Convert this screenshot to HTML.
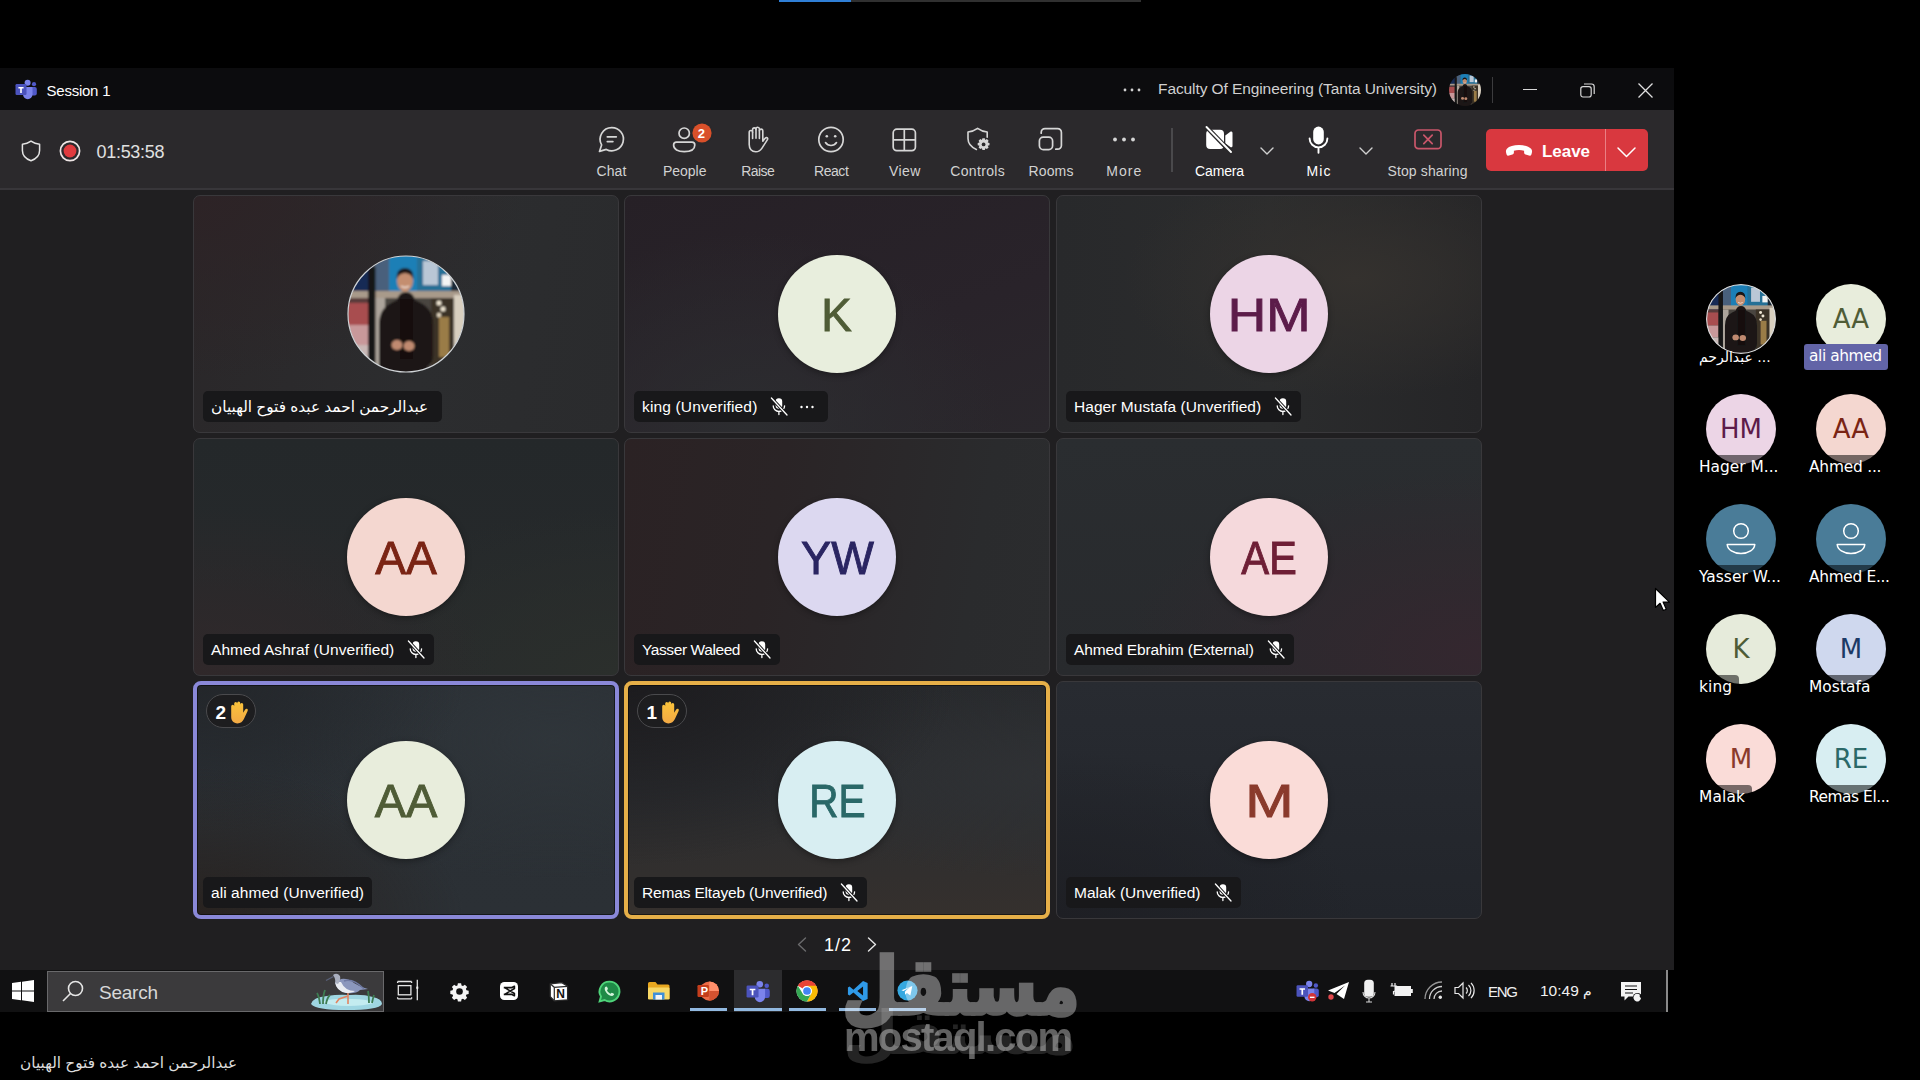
<!DOCTYPE html>
<html lang="en">
<head>
<meta charset="utf-8">
<title>Session 1</title>
<style>
*{box-sizing:border-box;margin:0;padding:0}
html,body{width:1920px;height:1080px;overflow:hidden;background:#000}
body{position:relative;font-family:"Liberation Sans","DejaVu Sans",sans-serif;color:#fff}
.abs{position:absolute}
.t{position:absolute;white-space:nowrap;line-height:1}
svg{position:absolute;overflow:visible}
/* top progress */
#prog{left:779px;top:0;width:362px;height:2px;background:#303030}
#prog i{display:block;width:72px;height:2px;background:#2f7fd6}
/* window */
#win{left:0;top:68px;width:1674px;height:902px;background:#201f21}
#title{left:0;top:0;width:1674px;height:42px;background:#0c0c0e}
#tool{left:0;top:42px;width:1674px;height:80px;background:#2b292c;border-bottom:2px solid #38363a}
.lbl{font-size:14px;color:#d2d2d2;text-align:center;transform:translateX(-50%)}
.lbl.w{color:#fff}
/* tiles */
.tile{position:absolute;width:426px;height:238px;border-radius:7px;border:1px solid #39383b;overflow:hidden}
.av{position:absolute;left:153px;top:59px;width:118px;height:118px;border-radius:50%;font-size:46.500px;letter-spacing:0;-webkit-text-stroke:.9px currentColor;text-align:center;line-height:120px;box-shadow:0 2px 6px rgba(0,0,0,.35)}
.nm{position:absolute;left:9px;top:195px;height:31px;border-radius:5px;background:#18181a;font-size:15.5px;line-height:31px;padding:0 8px;color:#fff;white-space:nowrap}
.nm svg{position:static;display:inline-block;vertical-align:middle}
.nm .mic{margin:-3px 1px 0 13px}
.nm .dots{margin:-2px 6px 0 11px}
.nm[dir=rtl]{padding:0 14px 0 8px;font-size:15.300px}
.tile.hl{border-color:transparent;overflow:visible}
.ring{position:absolute;left:-1px;top:-1px;right:-1px;bottom:-1px;border:4px solid;border-radius:8px;box-shadow:inset 0 0 0 1px rgba(0,0,0,.5)}
.hand .hi{position:absolute;left:21px;top:4.500px}
.hand .hi svg{position:static}
.hand{position:absolute;left:12px;top:12px;width:50px;height:34px;border-radius:17px;border:1px solid #4a4a4d;background:#1d1d1f;font-size:19px;font-weight:bold;line-height:35px;padding-left:8.500px}
/* side */
.sa{position:absolute;width:70px;height:70px;border-radius:50%;font-family:"DejaVu Sans",sans-serif;font-size:26px;line-height:70px;text-align:center;overflow:hidden}
.sl{position:absolute;font-family:"DejaVu Sans",sans-serif;font-size:15.400px;line-height:24px;color:#fff;white-space:nowrap;background:rgba(0,0,0,.52);padding:0 7px 0 0;border-radius:0 4px 0 0}
/* taskbar */
#task{left:0;top:970px;width:1668px;height:42px;background:#111112}
.ul{position:absolute;top:38px;height:3px;width:37px;background:#92b9e0}
</style>
</head>
<body>
<div class="abs" id="prog"><i></i></div>

<div class="abs" id="win">
  <div class="abs" id="title">
    <span class="t" style="left:46.500px;top:14.500px;font-size:15px;color:#fff"><span class="ls" style="letter-spacing:-0.234px">Session 1</span></span>
    <span class="t" style="left:1158px;top:13px;font-size:15.5px;color:#d0d0d0"><span class="ls" style="letter-spacing:-0.089px">Faculty Of Engineering (Tanta University)</span></span>

    <!-- teams logo -->
    <svg style="left:15px;top:11px" width="22" height="21" viewBox="0 0 22 21">
      <circle cx="19" cy="5.2" r="2.1" fill="#5059c9"/>
      <rect x="15.5" y="8" width="6.3" height="8.5" rx="2" fill="#5059c9"/>
      <circle cx="12.6" cy="3.8" r="3" fill="#7b83eb"/>
      <path d="M8 8h9.5v7.5a4.7 4.7 0 0 1-9.5 0z" fill="#7b83eb"/>
      <rect x="0.5" y="5" width="11" height="11" rx="1.2" fill="#4b53bc"/>
      <path d="M3.4 7.9h5.2v1.5H6.8v4.6H5.2V9.4H3.4z" fill="#fff"/>
    </svg>
    <svg style="left:1123px;top:20px" width="18" height="4" viewBox="0 0 18 4"><circle cx="2" cy="2" r="1.4" fill="#d0d0d0"/><circle cx="9" cy="2" r="1.4" fill="#d0d0d0"/><circle cx="16" cy="2" r="1.4" fill="#d0d0d0"/></svg>
    <!-- small avatar -->
    <svg style="left:1449px;top:6px" width="32" height="32" viewBox="0 0 118 118"><defs><clipPath id="cp3"><circle cx="59" cy="59" r="59"/></clipPath></defs><g clip-path="url(#cp3)"><use href="#phg"/></g></svg>
    <div class="abs" style="left:1492px;top:9px;width:1px;height:26px;background:#3c3c3e"></div>
    <div class="abs" style="left:1523px;top:21px;width:14px;height:1px;background:#d8d8d8"></div>
    <svg style="left:1580px;top:15px" width="15" height="15" viewBox="0 0 15 15" fill="none" stroke="#d8d8d8" stroke-width="1.2"><rect x="0.8" y="3.6" width="10.4" height="10.4" rx="2.2"/><path d="M4 1h7.5a2.7 2.7 0 0 1 2.7 2.7V11"/></svg>
    <svg style="left:1638px;top:15px" width="15" height="15" viewBox="0 0 15 15" stroke="#e0e0e0" stroke-width="1.3"><path d="M0.5 0.5l14 14M14.5 0.5l-14 14"/></svg>
  </div>
  <div class="abs" id="tool">
    <span class="t" style="left:96.500px;top:32.500px;font-size:18px;color:#e0e0e0"><span class="ls" style="letter-spacing:-0.297px">01:53:58</span></span>

    <!-- shield -->
    <svg style="left:21px;top:30px" width="20" height="22" viewBox="0 0 20 22" fill="none" stroke="#e4e4e4" stroke-width="1.5" stroke-linejoin="round"><path d="M10 1.2c2.6 1.9 5.3 2.8 8.6 3v6.3c0 4.9-3.2 8.300-8.600 10.300C4.600 18.800 1.400 15.400 1.400 10.500V4.200C4.700 4 7.400 3.100 10 1.200z"/></svg>
    <!-- record -->
    <svg style="left:59px;top:30px" width="22" height="22" viewBox="0 0 22 22"><circle cx="11" cy="11" r="9.6" fill="none" stroke="#efe6e6" stroke-width="1.7"/><circle cx="11" cy="11" r="6.4" fill="#e03a3e"/></svg>

    <!-- chat -->
    <svg style="left:598px;top:16px" width="27" height="27" viewBox="0 0 27 27" fill="none" stroke="#d6d6d6" stroke-width="1.7" stroke-linecap="round" stroke-linejoin="round"><path d="M13.800 1.600a11.600 11.600 0 1 1-5.500 21.800L1.500 25.400l2.100-6.500A11.600 11.600 0 0 1 13.800 1.600z"/><path d="M9.300 10.800h9M9.300 15.600h5.600"/></svg>
    <span class="t lbl" style="left:611.5px;top:53.500px"><span class="ls" style="letter-spacing:0.141px">Chat</span></span>
    <!-- people -->
    <svg style="left:672px;top:17px" width="26" height="26" viewBox="0 0 26 26" fill="none" stroke="#d6d6d6" stroke-width="1.7"><circle cx="12.200" cy="6.200" r="5.200"/><path d="M4.500 15.200h15.500a2.800 2.800 0 0 1 2.800 2.800c0 4.300-4.400 6.600-10.600 6.600S1.600 22.300 1.600 18a2.900 2.900 0 0 1 2.900-2.800z"/></svg>
    <svg style="left:690px;top:11px" width="24" height="24" viewBox="0 0 24 24"><circle cx="12" cy="12" r="11.300" fill="#2a292b"/><circle cx="12" cy="12" r="9.600" fill="#d9502a"/></svg>
    <span class="t" style="left:697.8px;top:16.500px;font-size:13px;font-weight:bold;color:#fff">2</span>
    <span class="t lbl" style="left:684.7px;top:53.500px"><span class="ls" style="letter-spacing:-0.019px">People</span></span>
    <!-- raise -->
    <svg style="left:743.500px;top:16px" width="24" height="27" viewBox="0 0 24 27" fill="none" stroke="#d6d6d6" stroke-width="1.600" stroke-linecap="round" stroke-linejoin="round"><path d="M5.200 15.500V6.200a1.700 1.700 0 0 1 3.400 0V3.600a1.700 1.700 0 0 1 3.400 0V2.900a1.700 1.700 0 0 1 3.400 0v1.900a1.700 1.700 0 0 1 3.400 0v10.400l2.100-2.700c.8-1 2-1.200 2.600-.4.400.600.200 1.200-.2 1.800l-5.300 8.200c-1.500 2.300-3.400 3.700-6.200 3.700-4.200 0-6.600-3.100-6.600-7.300V8.900"/><path d="M8.600 6.200v6.300M12 3.600v8.700M15.400 4.800v7.700"/></svg>
    <span class="t lbl" style="left:757.8px;top:53.500px"><span class="ls" style="letter-spacing:-0.574px">Raise</span></span>
    <!-- react -->
    <svg style="left:817px;top:16px" width="28" height="28" viewBox="0 0 28 28" fill="none" stroke="#d6d6d6" stroke-width="1.700" stroke-linecap="round"><circle cx="14" cy="13.500" r="12.200"/><path d="M8.500 16.600c1.300 1.900 3.200 2.900 5.500 2.900s4.200-1 5.500-2.900"/><circle cx="9.800" cy="10.200" r="1.300" fill="#d6d6d6" stroke="none"/><circle cx="18.200" cy="10.200" r="1.300" fill="#d6d6d6" stroke="none"/></svg>
    <span class="t lbl" style="left:831.2px;top:53.500px"><span class="ls" style="letter-spacing:-0.445px">React</span></span>
    <!-- view -->
    <svg style="left:892px;top:18px" width="25" height="24" viewBox="0 0 25 24" fill="none" stroke="#d6d6d6" stroke-width="1.700"><rect x="1.200" y="1.200" width="22.200" height="21.400" rx="3.600"/><path d="M12.300 1.200v21.400M1.200 11.900h22.200"/></svg>
    <span class="t lbl" style="left:904.8px;top:53.500px"><span class="ls" style="letter-spacing:0.435px">View</span></span>
    <!-- controls -->
    <svg style="left:966px;top:17px" width="26" height="26" viewBox="0 0 26 26" fill="none" stroke="#d6d6d6" stroke-width="1.600" stroke-linejoin="round" stroke-linecap="round"><path d="M21.200 10.200V5c-3.600-.3-6.600-1.400-9.600-3.600C8.600 3.600 5.600 4.700 2 5v6.600c0 5 3 8.600 8.400 10.800"/><g transform="translate(17.600 17.400)" fill="#d6d6d6" stroke="none"><path d="M-1.200-6.200h2.400l.5 1.700 1.600-.8 1.700 1.700-.9 1.600 1.800.5v2.400l-1.800.5.900 1.600-1.700 1.700-1.600-.8-.5 1.700h-2.400l-.5-1.700-1.600.8-1.700-1.700.9-1.600-1.800-.5v-2.400l1.800-.5-.9-1.600 1.700-1.700 1.600.8z"/><circle r="1.900" fill="#2a292b"/></g></svg>
    <span class="t lbl" style="left:977.7px;top:53.500px"><span class="ls" style="letter-spacing:0.323px">Controls</span></span>
    <!-- rooms -->
    <svg style="left:1038px;top:17px" width="26" height="25" viewBox="0 0 26 25" fill="none" stroke="#d6d6d6" stroke-width="1.700" stroke-linecap="round"><path d="M3.200 6.200V5.400a3.800 3.800 0 0 1 3.800-3.800h12.600a3.800 3.800 0 0 1 3.800 3.800v13a3.800 3.800 0 0 1-3.800 3.800h-1.800"/><rect x="1.400" y="10.200" width="13.200" height="12.400" rx="3.800"/></svg>
    <span class="t lbl" style="left:1051px;top:53.500px"><span class="ls" style="letter-spacing:0.16px">Rooms</span></span>
    <!-- more -->
    <svg style="left:1112px;top:27px" width="24" height="5" viewBox="0 0 24 5" fill="#d6d6d6"><circle cx="3" cy="2.500" r="1.900"/><circle cx="12" cy="2.500" r="1.900"/><circle cx="21" cy="2.500" r="1.900"/></svg>
    <span class="t lbl" style="left:1124.3px;top:53.500px"><span class="ls" style="letter-spacing:1.031px">More</span></span>
    <div class="abs" style="left:1171px;top:18px;width:1.5px;height:44px;background:#4a494c"></div>
    <!-- camera off -->
    <svg style="left:1205px;top:16px" width="29" height="27" viewBox="0 0 29 27"><path d="M5.200 3.800h9.800a4 4 0 0 1 4 4v11.200a4 4 0 0 1-4 4H5.200a4 4 0 0 1-4-4V7.800a4 4 0 0 1 4-4z" fill="#fff"/><path d="M20.300 9.600l5-3.800c.9-.7 2.200-.1 2.200 1.100v13c0 1.200-1.300 1.800-2.200 1.100l-5-3.800z" fill="#fff"/><path d="M1 0.500l25 26" stroke="#2a292b" stroke-width="4.500"/><path d="M1.500 1l24.500 25" stroke="#fff" stroke-width="1.900" stroke-linecap="round"/></svg>
    <span class="t lbl w" style="left:1219.5px;top:53.500px"><span class="ls" style="letter-spacing:-0.159px">Camera</span></span>
    <svg style="left:1260px;top:37px" width="14" height="8" viewBox="0 0 14 8" fill="none" stroke="#d0d0d0" stroke-width="1.400" stroke-linecap="round" stroke-linejoin="round"><path d="M1 1l6 6 6-6"/></svg>
    <!-- mic -->
    <svg style="left:1308px;top:16px" width="21" height="28" viewBox="0 0 21 28"><rect x="5.200" y="0.600" width="10.600" height="17.800" rx="5.300" fill="#fff"/><path d="M1.600 12.500a8.900 8.900 0 0 0 17.800 0M10.500 21.800v5" fill="none" stroke="#fff" stroke-width="1.900" stroke-linecap="round"/></svg>
    <span class="t lbl w" style="left:1319px;top:53.500px"><span class="ls" style="letter-spacing:1.109px">Mic</span></span>
    <svg style="left:1359px;top:37px" width="14" height="8" viewBox="0 0 14 8" fill="none" stroke="#d0d0d0" stroke-width="1.400" stroke-linecap="round" stroke-linejoin="round"><path d="M1 1l6 6 6-6"/></svg>
    <!-- stop sharing -->
    <svg style="left:1414px;top:19px" width="28" height="21" viewBox="0 0 28 21" fill="none" stroke="#c9566a" stroke-width="1.700" stroke-linecap="round"><rect x="1" y="1" width="26" height="18.600" rx="3.400"/><path d="M9.800 6.200l8.400 8.400M18.200 6.200l-8.400 8.400"/></svg>
    <span class="t lbl" style="left:1427.5px;top:53.500px"><span class="ls" style="letter-spacing:0.126px">Stop sharing</span></span>
    <!-- leave -->
    <div class="abs" style="left:1486px;top:19px;width:162px;height:42px;border-radius:5px;background:#d9383f"></div>
    <div class="abs" style="left:1605px;top:19px;width:1px;height:42px;background:#ea7f84"></div>
    <svg style="left:1505px;top:34px" width="28" height="13" viewBox="0 0 28 13"><path d="M14 1C8.600 1 4.200 2.300 1.900 4.700.600 6 .700 8.200 1.600 10.400c.4 1 1.400 1.500 2.400 1.200l3.400-1c.9-.300 1.500-1.100 1.500-2V6.800c1.600-.600 3.300-.9 5.100-.9s3.500.3 5.100.9v1.800c0 .9.600 1.700 1.500 2l3.400 1c1 .3 2-.2 2.400-1.200.9-2.200 1-4.400-.3-5.700C23.800 2.300 19.400 1 14 1z" fill="#fff"/></svg>
    <span class="t" style="left:1542px;top:32.500px;font-size:17px;font-weight:bold;color:#fff"><span class="ls" style="letter-spacing:-0.051px">Leave</span></span>
    <svg style="left:1617px;top:37px" width="19" height="11" viewBox="0 0 19 11" fill="none" stroke="#fff" stroke-width="1.500" stroke-linecap="round" stroke-linejoin="round"><path d="M1 1l8.500 8.500L18 1"/></svg>
  </div>
</div>


<!-- tiles -->
<div class="tile" style="left:193px;top:195px;background:radial-gradient(ellipse at 0% 0%,#2d2326 0%,rgba(45,35,38,0) 55%),linear-gradient(100deg,#2a2729 0%,#2c2d2f 55%,#2a2b2d 100%);"><svg class="ph" style="left:153px;top:59px" width="118" height="118" viewBox="0 0 118 118">
<defs><clipPath id="cp"><circle cx="59" cy="59" r="58"/></clipPath><filter id="bl" x="-5%" y="-5%" width="110%" height="110%"><feGaussianBlur stdDeviation="0.9"/></filter></defs>
<g clip-path="url(#cp)"><g id="phg" filter="url(#bl)">
<rect x="-4" y="-4" width="126" height="126" fill="#4a443f"/>
<rect x="-4" y="-4" width="30" height="48" fill="#132a55"/>
<rect x="28" y="2" width="15" height="36" fill="#4a607c"/>
<rect x="42" y="-4" width="30" height="42" fill="#1b7fb6"/>
<rect x="70" y="-4" width="52" height="44" fill="#256f96"/>
<rect x="76" y="6" width="15" height="24" fill="#b9c7d6"/>
<rect x="95" y="20" width="10" height="11" fill="#f4f4f4"/>
<rect x="104" y="6" width="18" height="34" fill="#1d2b38"/>
<rect x="-4" y="36" width="126" height="7" fill="#a89a8a"/>
<rect x="-4" y="43" width="26" height="14" fill="#5a3a3a"/>
<rect x="0" y="48" width="21" height="22" fill="#a84e50"/>
<rect x="0" y="70" width="21" height="20" fill="#c8989a"/>
<rect x="0" y="90" width="24" height="30" fill="#c9b8b6"/>
<rect x="28" y="43" width="10" height="78" fill="#aca49b"/>
<rect x="84" y="43" width="24" height="78" fill="#3a3228"/>
<rect x="92" y="62" width="10" height="40" fill="#9a7c46"/>
<circle cx="92" cy="48" r="2.500" fill="#efe6d2"/><circle cx="96" cy="54" r="2.500" fill="#efe6d2"/><circle cx="92" cy="60" r="2.200" fill="#e4d8c0"/>
<rect x="107" y="40" width="15" height="82" fill="#d8cfbf"/>
<rect x="21" y="12" width="7.500" height="110" fill="#141414"/>
<path d="M32 122V70q0-16 12-22l6-3q2-8 9-8t9 8l6 3q12 6 12 22v30q0 8-6 12v10z" fill="#1b1919"/>
<path d="M53 44h13v60h-13z" fill="#121111"/>
<ellipse cx="58" cy="26" rx="8" ry="10.500" fill="#c48e70"/>
<path d="M49.500 24q0-11 8.500-11t8.500 11q-3-6-8.500-6t-8.500 6z" fill="#1a1512"/>
<path d="M54 31q4 3 8 0" stroke="#f0e2da" stroke-width="1.400" fill="none"/>
<ellipse cx="50" cy="90" rx="5.500" ry="5" fill="#c08a70"/><ellipse cx="62" cy="91" rx="5.500" ry="5" fill="#c08a70"/>
</g></g>
<circle cx="59" cy="59" r="58" fill="none" stroke="#cfd3d6" stroke-width="1.200"/>
</svg><div class="nm" dir="rtl"><span class="n">عبدالرحمن احمد عبده فتوح الهبيان</span></div></div>
<div class="tile" style="left:624px;top:195px;background:radial-gradient(ellipse at 30% 100%,#2c2d30 0%,rgba(44,45,48,0) 60%),linear-gradient(160deg,#262026 0%,#29232a 60%,#2a272c 100%);"><div class="av" style="background:#e8eedd;color:#4f5c36"><span class="ax" style="display:inline-block;transform:scaleX(0.982)">K</span></div><div class="nm"><span class="n"><span class="ls" style="letter-spacing:0.153px">king (Unverified)</span></span><svg class="mic" width="18" height="19" viewBox="0 0 18 19"><rect x="5.600" y="1.200" width="6.600" height="10.600" rx="3.300" fill="#fff"/><path d="M3.200 8.800a5.700 5.700 0 0 0 11.400 0M8.900 14.500v3" fill="none" stroke="#fff" stroke-width="1.300" stroke-linecap="round"/><path d="M1.200 0.800l16 17.400" stroke="#18181a" stroke-width="3.200"/><path d="M1.400 1l15.600 17" stroke="#fff" stroke-width="1.300" stroke-linecap="round"/></svg><svg class="dots" width="14" height="4" viewBox="0 0 14 4" fill="#fff"><circle cx="1.500" cy="2" r="1.200"/><circle cx="7" cy="2" r="1.200"/><circle cx="12.500" cy="2" r="1.200"/></svg></div></div>
<div class="tile" style="left:1056px;top:195px;background:radial-gradient(ellipse at 70% 35%,#34312e 0%,rgba(52,49,46,0) 55%),linear-gradient(90deg,#28292b 0%,#2b2c2d 50%,#252527 100%);"><div class="av" style="background:#ecd5e6;color:#5c1c4a"><span class="ax" style="display:inline-block;transform:scaleX(1.145)">HM</span></div><div class="nm"><span class="n"><span class="ls" style="letter-spacing:0.045px">Hager Mustafa (Unverified)</span></span><svg class="mic" width="18" height="19" viewBox="0 0 18 19"><rect x="5.600" y="1.200" width="6.600" height="10.600" rx="3.300" fill="#fff"/><path d="M3.200 8.800a5.700 5.700 0 0 0 11.400 0M8.900 14.500v3" fill="none" stroke="#fff" stroke-width="1.300" stroke-linecap="round"/><path d="M1.200 0.800l16 17.400" stroke="#18181a" stroke-width="3.200"/><path d="M1.400 1l15.600 17" stroke="#fff" stroke-width="1.300" stroke-linecap="round"/></svg></div></div>
<div class="tile" style="left:193px;top:438px;background:radial-gradient(ellipse at 0% 100%,#30282a 0%,rgba(48,40,42,0) 50%),radial-gradient(ellipse at 100% 100%,#2b2f2c 0%,rgba(43,47,44,0) 50%),linear-gradient(180deg,#24282a,#272a2c);"><div class="av" style="background:#f4d7d0;color:#7a2414"><span class="ax" style="display:inline-block;transform:scaleX(0.994)">AA</span></div><div class="nm"><span class="n"><span class="ls" style="letter-spacing:0.063px">Ahmed Ashraf (Unverified)</span></span><svg class="mic" width="18" height="19" viewBox="0 0 18 19"><rect x="5.600" y="1.200" width="6.600" height="10.600" rx="3.300" fill="#fff"/><path d="M3.200 8.800a5.700 5.700 0 0 0 11.400 0M8.900 14.500v3" fill="none" stroke="#fff" stroke-width="1.300" stroke-linecap="round"/><path d="M1.200 0.800l16 17.400" stroke="#18181a" stroke-width="3.200"/><path d="M1.400 1l15.600 17" stroke="#fff" stroke-width="1.300" stroke-linecap="round"/></svg></div></div>
<div class="tile" style="left:624px;top:438px;background:linear-gradient(100deg,#2b2224 0%,#2a2426 35%,#2a2b2d 80%,#2b2c2e 100%);"><div class="av" style="background:#dcd8f0;color:#2a2562"><span class="ax" style="display:inline-block;transform:scaleX(0.972)">YW</span></div><div class="nm"><span class="n"><span class="ls" style="letter-spacing:-0.408px">Yasser Waleed</span></span><svg class="mic" width="18" height="19" viewBox="0 0 18 19"><rect x="5.600" y="1.200" width="6.600" height="10.600" rx="3.300" fill="#fff"/><path d="M3.200 8.800a5.700 5.700 0 0 0 11.400 0M8.900 14.500v3" fill="none" stroke="#fff" stroke-width="1.300" stroke-linecap="round"/><path d="M1.200 0.800l16 17.400" stroke="#18181a" stroke-width="3.200"/><path d="M1.400 1l15.600 17" stroke="#fff" stroke-width="1.300" stroke-linecap="round"/></svg></div></div>
<div class="tile" style="left:1056px;top:438px;background:radial-gradient(ellipse at 100% 90%,#34272f 0%,rgba(52,39,47,0) 60%),linear-gradient(180deg,#2a2d30,#282a2d);"><div class="av" style="background:#f5d9dc;color:#6e1f36"><span class="ax" style="display:inline-block;transform:scaleX(0.898)">AE</span></div><div class="nm"><span class="n"><span class="ls" style="letter-spacing:-0.123px">Ahmed Ebrahim (External)</span></span><svg class="mic" width="18" height="19" viewBox="0 0 18 19"><rect x="5.600" y="1.200" width="6.600" height="10.600" rx="3.300" fill="#fff"/><path d="M3.200 8.800a5.700 5.700 0 0 0 11.400 0M8.900 14.500v3" fill="none" stroke="#fff" stroke-width="1.300" stroke-linecap="round"/><path d="M1.200 0.800l16 17.400" stroke="#18181a" stroke-width="3.200"/><path d="M1.400 1l15.600 17" stroke="#fff" stroke-width="1.300" stroke-linecap="round"/></svg></div></div>
<div class="tile hl" style="left:193px;top:681px;background:radial-gradient(ellipse at 0% 100%,#28221f 0%,rgba(40,34,31,0) 45%),radial-gradient(ellipse at 0% 0%,#23262a 0%,rgba(35,38,42,0) 45%),radial-gradient(ellipse at 85% 25%,#2f353a 0%,rgba(47,53,58,0) 55%),linear-gradient(180deg,#2a2f34,#2b3035);"><div class="ring" style="border-color:#8a88d8"></div><div class="hand">2<span class="hi"><svg width="20" height="23" viewBox="0 0 20 23"><defs><linearGradient id="hg" x1="0" y1="0" x2="0" y2="1"><stop offset="0" stop-color="#fbc43a"/><stop offset="1" stop-color="#f2a945"/></linearGradient></defs><path d="M3.200 13V5.200a1.500 1.500 0 0 1 3 0V2.600a1.500 1.500 0 0 1 3 0V2a1.500 1.500 0 0 1 3 0v1.600a1.500 1.500 0 0 1 3 0v8.200l1.800-3c.6-1 1.700-1.300 2.400-.700.6.500.5 1.300.1 2.100l-3.600 7.800c-1.300 2.800-3.300 4.400-6.400 4.400-4 0-6.300-2.700-6.300-6.600z" fill="url(#hg)"/></svg></span></div><div class="av" style="background:#e8eddc;color:#4f5c36"><span class="ax" style="display:inline-block;transform:scaleX(1.01)">AA</span></div><div class="nm"><span class="n"><span class="ls" style="letter-spacing:0.065px">ali ahmed (Unverified)</span></span></div></div>
<div class="tile hl" style="left:624px;top:681px;background:radial-gradient(ellipse at 0% 0%,#1c1b1e 0%,rgba(28,27,30,0) 55%),radial-gradient(ellipse at 100% 40%,#2f3134 0%,rgba(47,49,52,0) 50%),linear-gradient(180deg,#27292c 0%,#2b2d30 45%,#35302d 100%);"><div class="ring" style="border-color:#e6af48"></div><div class="hand">1<span class="hi"><svg width="20" height="23" viewBox="0 0 20 23"><defs><linearGradient id="hg2" x1="0" y1="0" x2="0" y2="1"><stop offset="0" stop-color="#fbc43a"/><stop offset="1" stop-color="#f2a945"/></linearGradient></defs><path d="M3.200 13V5.200a1.500 1.500 0 0 1 3 0V2.600a1.500 1.500 0 0 1 3 0V2a1.500 1.500 0 0 1 3 0v1.600a1.500 1.500 0 0 1 3 0v8.200l1.800-3c.6-1 1.700-1.300 2.400-.700.6.500.5 1.300.1 2.100l-3.600 7.800c-1.300 2.800-3.300 4.400-6.400 4.400-4 0-6.300-2.700-6.300-6.600z" fill="url(#hg2)"/></svg></span></div><div class="av" style="background:#d8eef2;color:#2a6868"><span class="ax" style="display:inline-block;transform:scaleX(0.872)">RE</span></div><div class="nm"><span class="n"><span class="ls" style="letter-spacing:-0.169px">Remas Eltayeb (Unverified)</span></span><svg class="mic" width="18" height="19" viewBox="0 0 18 19"><rect x="5.600" y="1.200" width="6.600" height="10.600" rx="3.300" fill="#fff"/><path d="M3.200 8.800a5.700 5.700 0 0 0 11.400 0M8.900 14.500v3" fill="none" stroke="#fff" stroke-width="1.300" stroke-linecap="round"/><path d="M1.200 0.800l16 17.400" stroke="#18181a" stroke-width="3.200"/><path d="M1.400 1l15.600 17" stroke="#fff" stroke-width="1.300" stroke-linecap="round"/></svg></div></div>
<div class="tile" style="left:1056px;top:681px;background:radial-gradient(ellipse at 0% 100%,#1e1f24 0%,rgba(30,31,36,0) 50%),linear-gradient(180deg,#282b31,#22252b);"><div class="av" style="background:#fadcd8;color:#8a3a2c"><span class="ax" style="display:inline-block;transform:scaleX(1.247)">M</span></div><div class="nm"><span class="n"><span class="ls" style="letter-spacing:0.043px">Malak (Unverified)</span></span><svg class="mic" width="18" height="19" viewBox="0 0 18 19"><rect x="5.600" y="1.200" width="6.600" height="10.600" rx="3.300" fill="#fff"/><path d="M3.200 8.800a5.700 5.700 0 0 0 11.400 0M8.900 14.500v3" fill="none" stroke="#fff" stroke-width="1.300" stroke-linecap="round"/><path d="M1.200 0.800l16 17.400" stroke="#18181a" stroke-width="3.200"/><path d="M1.400 1l15.600 17" stroke="#fff" stroke-width="1.300" stroke-linecap="round"/></svg></div></div>
<!-- pager -->
<svg style="left:797px;top:937px" width="10" height="15" viewBox="0 0 10 15" fill="none" stroke="#6a6a6c" stroke-width="1.400" stroke-linecap="round" stroke-linejoin="round"><path d="M8.500 1L1.500 7.500l7 6.500"/></svg>
<span class="t" style="left:824px;top:935.500px;font-size:18px;color:#fff"><span class="ls" style="letter-spacing:0.984px">1/2</span></span>
<svg style="left:867px;top:937px" width="10" height="15" viewBox="0 0 10 15" fill="none" stroke="#e6e6e6" stroke-width="1.400" stroke-linecap="round" stroke-linejoin="round"><path d="M1.500 1l7 6.500-7 6.500"/></svg>


<!-- side panel -->
<div class="sa" style="left:1706px;top:284px;background:#6f625d"><svg style="left:0;top:0" width="70" height="70" viewBox="0 0 118 118">
<defs><clipPath id="cp2"><circle cx="59" cy="59" r="58"/></clipPath></defs>
<g clip-path="url(#cp2)"><use href="#phg"/></g>
<circle cx="59" cy="59" r="58" fill="none" stroke="#d8dcde" stroke-width="2"/></svg></div>
<div class="sl" style="left:1699px;top:345px;background:none;font-size:14px">عبدالرحم ...</div>
<div class="sa" style="left:1816px;top:284px;background:#e8eddc;color:#4f5c36">AA</div>
<div class="sl" style="left:1804px;top:344px;height:26px;line-height:25px;padding:0 6px 0 5px;background:#6264a7;border-radius:3px"><span class="ls" style="letter-spacing:-0.412px">ali ahmed</span></div>
<div class="sa" style="left:1706px;top:394px;background:#ecd5e6;color:#5c1c4a">HM</div>
<div class="sl" style="left:1699px;top:455px"><span class="ls" style="letter-spacing:0.009px">Hager M...</span></div>
<div class="sa" style="left:1816px;top:394px;background:#f4d7d0;color:#7a2414">AA</div>
<div class="sl" style="left:1809px;top:455px"><span class="ls" style="letter-spacing:-0.199px">Ahmed ...</span></div>
<div class="sa" style="left:1706px;top:504px;background:#4a7c98"><svg style="left:20px;top:15px" width="30" height="36" viewBox="0 0 30 36" fill="none" stroke="#fff" stroke-width="1.500"><circle cx="15" cy="12" r="7.300"/><path d="M1.200 25.500h27.600c-.5 5.200-6 9-13.800 9s-13.300-3.800-13.800-9z" stroke-linejoin="round"/></svg></div>
<div class="sl" style="left:1699px;top:565px"><span class="ls" style="letter-spacing:0.042px">Yasser W...</span></div>
<div class="sa" style="left:1816px;top:504px;background:#4a7c98"><svg style="left:20px;top:15px" width="30" height="36" viewBox="0 0 30 36" fill="none" stroke="#fff" stroke-width="1.500"><circle cx="15" cy="12" r="7.300"/><path d="M1.200 25.500h27.600c-.5 5.200-6 9-13.800 9s-13.300-3.800-13.800-9z" stroke-linejoin="round"/></svg></div>
<div class="sl" style="left:1809px;top:565px"><span class="ls" style="letter-spacing:-0.312px">Ahmed E...</span></div>
<div class="sa" style="left:1706px;top:614px;background:#e6ebdb;color:#4f5c36">K</div>
<div class="sl" style="left:1699px;top:675px"><span class="ls" style="letter-spacing:0.094px">king</span></div>
<div class="sa" style="left:1816px;top:614px;background:#cfd8ee;color:#1c3a66">M</div>
<div class="sl" style="left:1809px;top:675px"><span class="ls" style="letter-spacing:0.078px">Mostafa</span></div>
<div class="sa" style="left:1706px;top:724px;background:#fadcd8;color:#8a3a2c">M</div>
<div class="sl" style="left:1699px;top:785px"><span class="ls" style="letter-spacing:0.164px">Malak</span></div>
<div class="sa" style="left:1816px;top:724px;background:#d8eef2;color:#2a6868">RE</div>
<div class="sl" style="left:1809px;top:785px"><span class="ls" style="letter-spacing:-0.448px">Remas El...</span></div>
<svg style="left:1654px;top:587px" width="18" height="26" viewBox="0 0 18 26"><path d="M1.500 1.500v19l4.600-4.200 3.200 7.200 3-1.300-3.200-7.100h6.400z" fill="#fff" stroke="#000" stroke-width="1.200" stroke-linejoin="round"/></svg>

<div class="abs" id="task">
  <!-- start -->
  <svg style="left:12px;top:10px" width="22" height="22" viewBox="0 0 22 22" fill="#fff"><path d="M0 3.100l9-1.250v8.650H0zM10 1.700L22 0v10.500H10zM0 11.500h9v8.650L0 18.900zM10 11.500h12V22l-12-1.700z"/></svg>
  <div class="abs" style="left:47px;top:1px;width:337px;height:41px;background:#3b3a3c;border:1.500px solid #69696b"></div>
  <svg style="left:62px;top:10px" width="22" height="22" viewBox="0 0 22 22" fill="none" stroke="#e6e6e6" stroke-width="1.600"><circle cx="13.500" cy="8.500" r="7"/><path d="M8.500 13.500L1 21"/></svg>
  <span class="t" style="left:99px;top:12.500px;font-size:19px;color:#d8d8d8"><span class="ls" style="letter-spacing:-0.241px">Search</span></span>
  <!-- bird picture -->
  <svg style="left:308px;top:1px" width="76" height="40" viewBox="0 0 76 40">
    <defs><filter id="bb" x="-5%" y="-5%" width="110%" height="110%"><feGaussianBlur stdDeviation="0.45"/></filter></defs>
    <g filter="url(#bb)">
    <path d="M3 33q2-7 16-8 12-2 22-1 14-1 24 2 9 2 9 7-3 6-36 6-30 0-35-6z" fill="#9fd6e2"/>
    <path d="M14 31q10-4 30-3 16 0 22 4-10 3-26 3t-26-4z" fill="#c4ecf0"/>
    <path d="M12 33q-1-8-3-11M15 33q0-9 2-14M18 33q1-6 4-9M61 32q0-7-1-12M64 32q1-5 2-8" stroke="#3e7d52" stroke-width="1.800" fill="none"/>
    <path d="M40 21l0 12M40 25l-9 3-3 4" stroke="#e28462" stroke-width="1.600" fill="none"/>
    <path d="M27 12q3 8 12 10 9 1 13-3l8-1q-8-2-14-6-6-5-13-4z" fill="#8b97bd"/>
    <path d="M27 11q1 9 11 11 6 0 9-2-10 0-14-9z" fill="#e9ecf2"/>
    <path d="M25 4q4-3 7 1 1 4-2 8l-3-1q1-4-2-8z" fill="#a9afbf"/>
    <path d="M25.500 5.500L18 9.500" stroke="#59607a" stroke-width="1.300"/>
    <path d="M36 10q9-3 20 8" stroke="#6f7aa3" stroke-width="1.500" fill="none"/>
    </g>
  </svg>
  <!-- task view -->
  <svg style="left:396px;top:9px" width="24" height="24" viewBox="0 0 24 24" fill="none" stroke="#e6e6e6" stroke-width="1.300"><rect x="2.300" y="6.600" width="12.600" height="9.200"/><path d="M1.600 2.500h14M1.600 19.800h14M1.600 2.500v1.600M15.600 2.500v1.600M1.600 19.800v-1.600M15.600 19.800v-1.600M21.300 0.800v20.400"/><rect x="20.300" y="7.600" width="2" height="2.200" fill="#f2f2f2" stroke="none"/></svg>
  <!-- settings -->
  <svg style="left:451px;top:13px" width="17" height="17" viewBox="-10 -10 20 20"><g fill="#f4f4f4"><path d="M-1.900-9.800h3.800l.5 2.600 1.700.7 2.200-1.500 2.700 2.700-1.500 2.200.7 1.700 2.600.5v3.800l-2.600.5-.7 1.700 1.500 2.200-2.700 2.700-2.200-1.500-1.700.7-.5 2.600h-3.800l-.5-2.600-1.700-.7-2.200 1.500-2.700-2.700 1.500-2.200-.7-1.700-2.600-.5v-3.800l2.600-.5.7-1.700-1.500-2.200 2.700-2.700 2.200 1.500 1.700-.7z"/></g><circle r="3.900" fill="#111112"/></svg>
  <!-- capcut -->
  <svg style="left:500px;top:12px" width="18" height="18" viewBox="0 0 20 20"><rect width="20" height="20" rx="4.800" fill="#fff"/><path d="M4.200 6.300h8.600l3.200-1.600v2.600L5.200 13.700M4.200 13.700h8.600l3.200 1.600v-2.600L5.200 6.300" fill="none" stroke="#111" stroke-width="1.800" stroke-linejoin="round"/></svg>
  <!-- notion -->
  <svg style="left:549px;top:11px" width="20" height="21" viewBox="0 0 20 21"><path d="M1.200 2.800l11.600-1.200 5.800 3.600v13.600l-13.400 1-4-4.200z" fill="#fff" stroke="#2a2a2a" stroke-width="1.300" stroke-linejoin="round"/><path d="M1.500 3l3.800 3.300 13-1M5.300 6.300v13.200" fill="none" stroke="#2a2a2a" stroke-width="1.200"/></svg>
  <span class="t" style="left:556.200px;top:17.500px;font-size:12px;font-weight:bold;color:#111">N</span>
  <!-- whatsapp -->
  <svg style="left:598px;top:10px" width="23" height="23" viewBox="0 0 24 24"><path d="M12 1.700a10.300 10.300 0 0 0-8.900 15.600L1.700 22.300l5.200-1.400A10.300 10.300 0 1 0 12 1.700z" fill="#1f8a47" stroke="#4fd47a" stroke-width="2"/><path d="M8.500 6.800c-.5 0-1.500.8-1.500 2.300 0 3 4 7.500 7.500 7.500 1.300 0 2.300-.9 2.300-1.700 0-.5-2-1.600-2.500-1.600s-.7 1-1.200 1c-1 0-3.600-2.500-3.600-3.500 0-.5.900-.8.900-1.300s-.9-2.700-1.900-2.700z" fill="#d4f5dc"/></svg>
  <!-- explorer -->
  <svg style="left:647px;top:11px" width="23" height="20" viewBox="0 0 23 20"><path d="M1 2.500a1.500 1.500 0 0 1 1.500-1.500h6l2 2.500H21a1.500 1.500 0 0 1 1.500 1.500V18H1z" fill="#e9a820"/><rect x="1" y="6.500" width="21.500" height="12" rx="1" fill="#f8d866"/><rect x="6" y="11.500" width="11.500" height="7" fill="#3f8fd8"/><rect x="8.500" y="14" width="6.500" height="4.500" fill="#f4f4f4"/></svg>
  <!-- powerpoint -->
  <svg style="left:697px;top:10px" width="22" height="22" viewBox="0 0 24 24"><circle cx="13.500" cy="12" r="10.500" fill="#ed6c47"/><path d="M13.500 1.500a10.500 10.500 0 0 1 10.500 10.500H13.500z" fill="#ff8f6b"/><path d="M13.500 22.500A10.500 10.500 0 0 0 24 12H13.500z" fill="#d35230"/><rect x="0.500" y="5.500" width="12.500" height="13" rx="1.300" fill="#c43e1c"/></svg>
  <span class="t" style="left:700.800px;top:15.500px;font-size:11px;font-weight:bold;color:#fff">P</span>
  <!-- teams active -->
  <div class="abs" style="left:734px;top:0;width:48px;height:42px;background:#2c2c2e"></div>
  <svg style="left:746px;top:10px" width="24" height="23" viewBox="0 0 22 21">
      <circle cx="19" cy="5.200" r="2.100" fill="#5059c9"/><rect x="15.500" y="8" width="6.300" height="8.500" rx="2" fill="#5059c9"/>
      <circle cx="12.600" cy="3.800" r="3" fill="#7b83eb"/><path d="M8 8h9.500v7.500a4.700 4.700 0 0 1-9.500 0z" fill="#7b83eb"/>
      <rect x="0.500" y="5" width="11" height="11" rx="1.200" fill="#4b53bc"/><path d="M3.400 7.900h5.200v1.500H6.800v4.600H5.200V9.400H3.400z" fill="#fff"/></svg>
  <!-- chrome -->
  <svg style="left:796px;top:10px" width="22" height="22" viewBox="-12 -12 24 24"><circle r="11.500" fill="#fff"/><path d="M0-11.500A11.500 11.500 0 0 1 9.960 5.750L4.760 -2.750A5.500 5.500 0 0 0 0-5.500H-9.960A11.500 11.500 0 0 1 0-11.500z" fill="#e94335" transform="rotate(0)"/><path d="M-9.960-5.750A11.500 11.500 0 0 1 0-11.500 11.500 11.500 0 0 1 9.960-5.750H0A5.500 5.500 0 0 0-4.760-2.750z" fill="#e94335"/><path d="M9.960-5.750A11.500 11.500 0 0 1 0 11.500L4.760 2.750A5.500 5.500 0 0 0 4.760-2.750L0-5.750z" fill="#fbbc05"/><path d="M0 11.500A11.500 11.500 0 0 1-9.960-5.750L-4.760 2.750A5.500 5.500 0 0 0 4.760 2.750z" fill="#34a853"/><circle r="5.300" fill="#fff"/><circle r="4.200" fill="#4285f4"/></svg>
  <!-- vscode -->
  <svg style="left:847px;top:10px" width="22" height="22" viewBox="0 0 24 24"><path d="M17.500 1l5 2.400v17.200l-5 2.400L7 13.500 2.800 16.800 1 15.900V8.100l1.800-.9L7 10.500zM17.500 7l-6.300 5 6.300 5z" fill="#2f9ae8"/></svg>
  <!-- telegram -->
  <svg style="left:897px;top:10px" width="21" height="21" viewBox="0 0 24 24"><circle cx="12" cy="12" r="11.500" fill="#35a8e0"/><path d="M5 11.800l12.500-5-2.200 11-4-3-2 2-.3-3.500 6-5.500-7.500 4.700z" fill="#fff"/></svg>

  <!-- tray -->
  <svg style="left:1296px;top:10px" width="23" height="22" viewBox="0 0 22 21">
      <circle cx="19" cy="5.200" r="2.100" fill="#5059c9"/><rect x="15.500" y="8" width="6.300" height="8.500" rx="2" fill="#5059c9"/>
      <circle cx="12.600" cy="3.800" r="3" fill="#7b83eb"/><path d="M8 8h9.500v7.500a4.700 4.700 0 0 1-9.500 0z" fill="#7b83eb"/>
      <rect x="0.500" y="5" width="11" height="11" rx="1.200" fill="#4b53bc"/><path d="M3.400 7.900h5.200v1.500H6.800v4.600H5.200V9.400H3.400z" fill="#fff"/>
      <circle cx="15.500" cy="16.500" r="4" fill="#d13438"/><rect x="13.300" y="15.900" width="4.400" height="1.300" fill="#fff"/></svg>
  <svg style="left:1327px;top:11px" width="23" height="20" viewBox="0 0 23 20"><path d="M22 1L1 9.500l6.500 2.500L18 4.500 9.500 13l7.500 5z" fill="#fff"/><circle cx="4" cy="16" r="2.700" fill="#e0474c"/></svg>
  <svg style="left:1362px;top:9px" width="14" height="24" viewBox="0 0 14 24"><rect x="2.200" y="0.800" width="9.600" height="17" rx="3.600" fill="#f0f0f0"/><path d="M1 13a6 6 0 0 0 12 0M7 19.500v3.500M4 23h6" fill="none" stroke="#d8d8d8" stroke-width="1.100"/></svg>
  <svg style="left:1390px;top:13px" width="23" height="15" viewBox="0 0 23 15"><rect x="4.500" y="3" width="16.500" height="10" fill="#f2f2f2"/><rect x="21" y="6" width="1.800" height="4" fill="#f2f2f2"/><path d="M2 0v3M5 0v3M0.500 3h6v2.500a3 3 0 0 1-3 3v3" fill="none" stroke="#f2f2f2" stroke-width="1.200"/></svg>
  <svg style="left:1424px;top:11px" width="19" height="19" viewBox="0 0 19 19" fill="none" stroke="#cfcfcf" stroke-width="1.300"><path d="M1 18A17 17 0 0 1 18 1" opacity=".7"/><path d="M5.500 18A12.500 12.500 0 0 1 18 5.500"/><path d="M10 18a8 8 0 0 1 8-8"/><circle cx="16.300" cy="16.300" r="1.700" fill="#e8e8e8" stroke="none"/></svg>
  <svg style="left:1454px;top:12px" width="20" height="17" viewBox="0 0 20 17" fill="none" stroke="#e8e8e8" stroke-width="1.200"><path d="M1 5.500h3.500l4.500-4.500v15l-4.500-4.500H1z"/><path d="M12 5.500a4 4 0 0 1 0 6M14.500 3a7.500 7.500 0 0 1 0 11M17 0.800a11 11 0 0 1 0 15.400"/></svg>
  <span class="t" style="left:1488px;top:14px;font-size:15px;color:#f0f0f0"><span class="ls" style="letter-spacing:-1.258px">ENG</span></span>
  <span class="t" style="left:1540px;top:13px;font-size:15.500px;color:#f0f0f0;font-family:'Liberation Sans','DejaVu Sans',sans-serif" dir="ltr">10:49 <span style="font-size:14px">م</span></span>
  <svg style="left:1620px;top:11px" width="23" height="22" viewBox="0 0 23 22"><path d="M1 1h20v14.500H8.500L4.500 19.500V15.500H1z" fill="#f4f4f4"/><path d="M5 5h12M5 8.500h12M5 12h8" stroke="#111112" stroke-width="1.200"/><circle cx="17.500" cy="16.500" r="4.600" fill="#111112"/><path d="M19.800 13.800a3.800 3.800 0 1 0 1.200 3.500 3 3 0 0 1-1.200-3.500z" fill="#f4f4f4"/></svg>
  <div class="abs" style="left:1666px;top:0;width:2px;height:42px;background:#8a8a8a"></div>
  <div class="ul" style="left:690px"></div><div class="ul" style="left:734px;width:48px"></div><div class="ul" style="left:789px"></div><div class="ul" style="left:839px"></div><div class="ul" style="left:889px"></div>
</div>

<!-- caption -->
<div class="t" dir="rtl" style="left:20px;top:1053px;font-size:15.300px;color:#dcdcdc;line-height:20px">عبدالرحمن احمد عبده فتوح الهبيان</div>
<!-- watermark -->
<div class="t" dir="rtl" style="left:842px;top:947px;font-family:'DejaVu Sans','Liberation Sans',sans-serif;font-weight:bold;font-size:65px;color:#fff;-webkit-text-stroke:3px #fff;opacity:.36;transform-origin:0 0;transform:scaleY(1.22)">مستقل</div>
<div class="t" dir="rtl" style="left:843px;top:1003px;font-family:'DejaVu Sans','Liberation Sans',sans-serif;font-weight:bold;font-size:64px;color:#fff;opacity:.14;transform-origin:0 0;transform:scaleY(.95)">مستقل</div>
<div class="t" style="left:844px;top:1017px;font-weight:bold;font-size:40px;letter-spacing:-1.800px;color:#fff;opacity:.38"><span class="ls" style="letter-spacing:-1.772px">mostaql.com</span></div>
</body>
</html>
